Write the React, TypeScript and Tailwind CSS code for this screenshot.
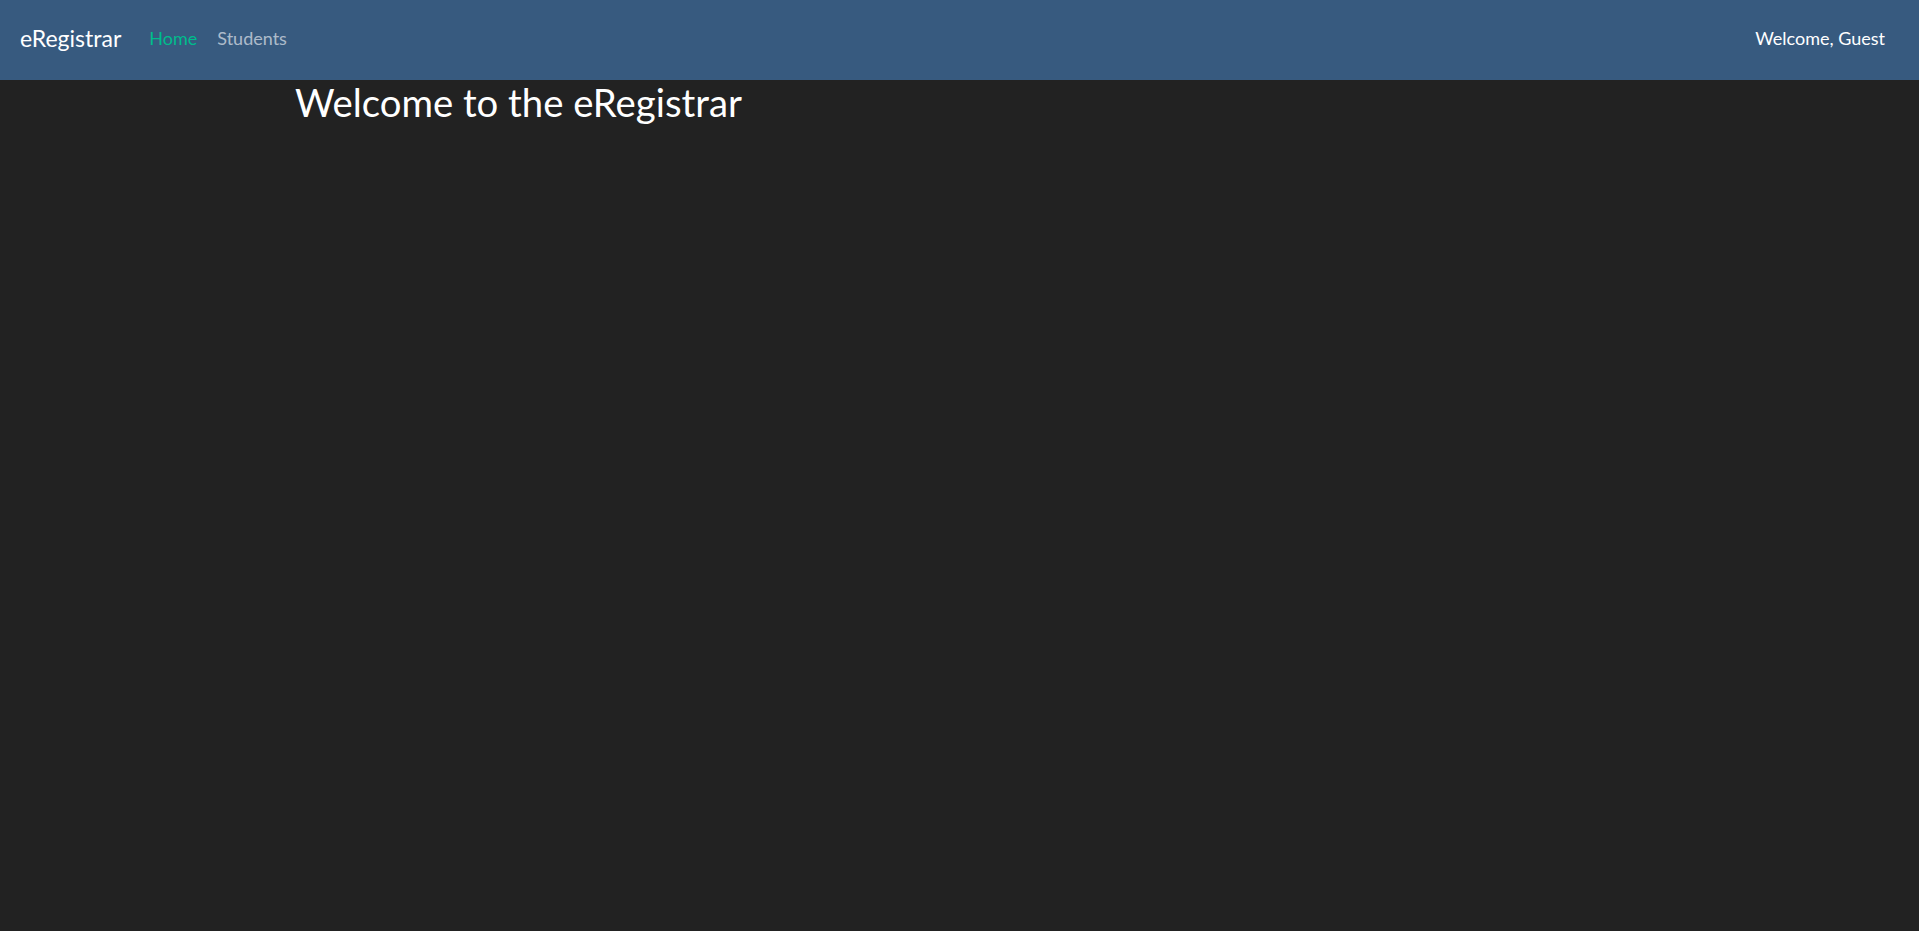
export default function App() {
  return (
    <div className="min-h-[931px] bg-[#222222] font-['Lato',sans-serif]">
      <nav className="h-[80px] bg-[#375a7f] flex items-center pl-[20px] pr-[34px] pb-[4px]">
        <span className="text-[23px] text-white mr-[28px]">eRegistrar</span>
        <a className="text-[18px] text-[#00bc8c]">Home</a>
        <a className="text-[18px] text-white/60 ml-[20px]">Students</a>
        <span className="ml-auto text-[18px] text-white">Welcome, Guest</span>
      </nav>
      <main className="pl-[295px]">
        <h1 className="text-[38.3px] leading-[1.2] text-white font-normal">Welcome to the eRegistrar</h1>
      </main>
    </div>
  );
}
